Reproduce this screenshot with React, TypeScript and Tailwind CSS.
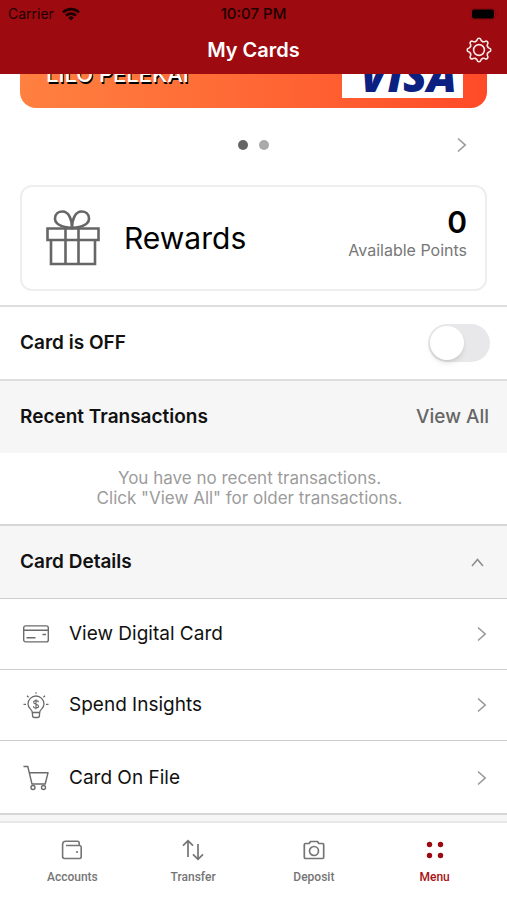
import React, { useState } from "react";

const Chevron = () => (
  <svg width="10" height="16" viewBox="0 0 10 16" fill="none" stroke="#999" strokeWidth="1.6">
    <path d="M1 1.5 8.2 8 1 14.5" />
  </svg>
);

const toothAngles = [0, 45, 90, 135, 180, 225, 270, 315];

const GearIcon = () => (
  <svg width="26" height="26" viewBox="-13 -13 26 26" fill="none" stroke="#fbeaea" strokeWidth="1.6" strokeLinecap="round">
    {toothAngles.map((angle) => (
      <path
        key={angle}
        d="M-3.52-8.5C-2.4-8.96-2-9.2-1.8-10.4Q-1.6-11.8 0-11.8Q1.6-11.8 1.8-10.4C2-9.2 2.4-8.96 3.52-8.5"
        transform={`rotate(${angle})`}
      />
    ))}
    <circle r="5.4" />
  </svg>
);

const WifiIcon = () => (
  <svg width="18" height="14" viewBox="0 0 18 14" fill="none" stroke="#1c0002" strokeWidth="2.6">
    <path d="M1 5.4a11.4 11.4 0 0 1 16 0M4 8.6a7.2 7.2 0 0 1 10 0" />
    <path d="M9 13.6 6.2 10.7a4 4 0 0 1 5.6 0z" fill="#1c0002" stroke="none" />
  </svg>
);

const BatteryIcon = () => (
  <svg width="29" height="12" viewBox="0 0 29 12">
    <rect x="0.5" y="0.5" width="25" height="11" rx="3" fill="none" stroke="#8d080d" />
    <rect x="2" y="1.5" width="22" height="9" rx="2" fill="#000" />
    <path d="M27 4v4c1.2-.4 1.2-3.6 0-4z" fill="#7d060b" />
  </svg>
);

const GiftIcon = () => (
  <svg width="54" height="56" viewBox="0 0 54 56" fill="none" stroke="#666" strokeWidth="2.6">
    <path d="M1.5 18.5h51v11.5h-51z" />
    <path d="M5 30v24h44V30M19.5 18.5V54M32.5 18.5V54" />
    <path d="M26 18C14 17 9 13.5 9 8.5 9 4 12.5 1.5 16.5 1.5 22.5 1.5 26 9 26 18zM26 18c12-1 17-4.5 17-9.5 0-4.5-3.5-7-7.5-7-6 0-9.5 7.5-9.5 16.5z" />
  </svg>
);

const CardIcon = () => (
  <svg width="26" height="18" viewBox="0 0 26 18" fill="none" stroke="#6b6b6b" strokeWidth="1.4">
    <rect x="0.7" y="0.9" width="24.6" height="16" rx="2" />
    <path d="M.7 5.2h24.6M3.5 12.7h9M19.500 9.500h3.500" />
  </svg>
);

const BulbIcon = () => (
  <svg width="26" height="27" viewBox="0 0 26 27" fill="none" stroke="#6b6b6b" strokeWidth="1.3">
    <path d="M9.3 20.5C9.3 17.5 5 16.5 5 12a8 8 0 0 1 16 0c0 4.500-4.300 5.500-4.300 8.500z" />
    <path d="M9.500 20.500v3c0 1 .7 2 2 2h3c1.300 0 2-1 2-2v-3M13 .3v1.500M.5 12.300H3M23 12.300h2.500M4 3.700l1.600 1.600M22 3.700l-1.600 1.600" />
    <path d="M15.400 10.200c0-1-1-1.600-2.400-1.600s-2.400.6-2.400 1.700c0 2.500 5 1.500 5 4 0 1.100-1.100 1.700-2.600 1.700s-2.600-.7-2.600-1.800M13 7.300v10" strokeWidth="1.1" />
  </svg>
);

const CartIcon = () => (
  <svg width="26" height="26" viewBox="0 0 26 26" fill="none" stroke="#6b6b6b" strokeWidth="1.4" strokeLinejoin="round">
    <path d="M.5 1.500h4.300L9 19h13.200L25 7.800H6.300" />
    <circle cx="10" cy="22.500" r="2" />
    <circle cx="20.500" cy="22.500" r="2" />
  </svg>
);

const WalletIcon = () => (
  <svg width="22" height="20" viewBox="0 0 22 20" fill="none" stroke="#757575" strokeWidth="1.6">
    <path d="M5 5.500h13.500a1.700 1.700 0 0 1 1.700 1.700v9.600a1.700 1.700 0 0 1-1.700 1.700h-15a1.900 1.900 0 0 1-1.900-1.900V4.500c0-2 1.200-3.200 3.200-3.200h11.700c1 0 1.700.7 1.700 1.700v2.500" />
    <circle cx="16" cy="12" r="1.1" fill="#757575" stroke="none" />
  </svg>
);

const TransferIcon = () => (
  <svg width="22" height="22" viewBox="0 0 22 22" fill="none" stroke="#757575" strokeWidth="1.7">
    <path d="M6 18V2M1 6.700l5-5 5 5M16 5v15M11 15.300l5 5 5-5" />
  </svg>
);

const CameraIcon = () => (
  <svg width="22" height="20" viewBox="0 0 22 20" fill="none" stroke="#757575" strokeWidth="1.7" strokeLinejoin="round">
    <path d="M2.500 3.500h3.700l1.300-2h7l1.300 2h3.700c.8 0 1.200.5 1.200 1.200v12.600c0 .7-.4 1.200-1.200 1.200h-17c-.8 0-1.200-.5-1.200-1.200V4.700c0-.7.400-1.200 1.200-1.200z" />
    <circle cx="11" cy="11" r="4.5" />
  </svg>
);

const MenuIcon = () => (
  <svg width="18" height="18" viewBox="0 0 18 18" fill="#9b0a10">
    <circle cx="3.5" cy="3.5" r="2.7" />
    <circle cx="14.5" cy="3.5" r="2.7" />
    <circle cx="3.5" cy="14.5" r="2.7" />
    <circle cx="14.5" cy="14.5" r="2.7" />
  </svg>
);

const links = [
  { label: "View Digital Card", icon: <CardIcon /> },
  { label: "Spend Insights", icon: <BulbIcon /> },
  { label: "Card On File", icon: <CartIcon /> },
];

const tabs = [
  { label: "Accounts", icon: <WalletIcon /> },
  { label: "Transfer", icon: <TransferIcon /> },
  { label: "Deposit", icon: <CameraIcon /> },
  { label: "Menu", icon: <MenuIcon />, active: true },
];

export default function App() {
  const [cardOn, setCardOn] = useState(false);
  const [open, setOpen] = useState(true);

  return (
    <div className="flex min-h-screen flex-col bg-white font-['Inter',sans-serif] text-[#111]">
      <header className="bg-[#9d0a0f]">
        <div className="grid h-7 grid-cols-3 items-center px-2 text-sm text-[#1c0002]">
          <div className="flex items-center gap-2">
            <span>Carrier</span>
            <WifiIcon />
          </div>
          <span className="text-center text-[15px] font-medium">10:07 PM</span>
          <div className="flex justify-end">
            <BatteryIcon />
          </div>
        </div>
        <div className="grid h-[46px] grid-cols-[1fr_auto_1fr] items-center px-[15px] pb-[2px]">
          <h1 className="col-start-2 text-xl font-semibold text-white">My Cards</h1>
          <button type="button" aria-label="Card settings" className="justify-self-end">
            <GearIcon />
          </button>
        </div>
      </header>

      <main className="flex-1 bg-[#f6f6f6]">
        <section className="bg-white">
          {/* only the bottom edge of the card shows below the header */}
          <div className="flex h-[34px] items-end overflow-hidden px-5">
            <div className="flex h-52 w-full shrink-0 items-end justify-between rounded-2xl bg-linear-to-r from-[#ff8040] to-[#ff4a28] pr-6 pl-[26px]">
              <span className="pb-5 text-[22px] leading-7 font-medium [text-shadow:1px_2px_0_#000] text-white">LILO PELEKAI</span>
              <div className="mb-[10px] flex h-14 w-[121px] items-end justify-center bg-white pl-3 font-['Open_Sans',sans-serif] text-[44px] leading-[46px] font-extrabold text-[#0b2080] italic">
                VISA
              </div>
            </div>
          </div>
          <div className="grid h-[77px] grid-cols-[1fr_auto_1fr] items-center px-10 pb-1">
            <div className="col-start-2 flex gap-[11px]">
              <span className="size-[10px] rounded-full bg-[#666]" />
              <span className="size-[10px] rounded-full bg-[#aaa]" />
            </div>
            <button type="button" aria-label="Next card" className="justify-self-end">
              <Chevron />
            </button>
          </div>
          <div className="px-5 pb-[14px]">
            <div className="flex h-[106px] items-center rounded-xl border-2 border-[#eee] pr-[18px] pl-6">
              <GiftIcon />
              <h2 className="ml-6 flex-1 text-[30px] leading-9 text-black">Rewards</h2>
              <div className="pb-3 text-right">
                <p className="text-[30px] leading-9 font-semibold text-black">0</p>
                <p className="text-base leading-5 text-[#777]">Available Points</p>
              </div>
            </div>
          </div>
        </section>

        <section className="flex h-[76px] items-center justify-between border-y-2 border-[#dedede] bg-white pr-[17px] pl-5">
          <label htmlFor="card-switch" className="text-[19px] font-semibold">
            Card is OFF
          </label>
          <input
            id="card-switch"
            type="checkbox"
            role="switch"
            checked={cardOn}
            onChange={(e) => setCardOn(e.target.checked)}
            className="flex h-[38px] w-[62px] appearance-none items-center rounded-full bg-[#e8e8ea] px-[2px] before:size-[34px] before:rounded-full before:bg-white before:shadow-md checked:justify-end checked:bg-[#9d0a0f]"
          />
        </section>

        <section>
          <div className="flex h-[72px] items-center justify-between pr-[18px] pl-5">
            <h2 className="text-[19px] font-semibold">Recent Transactions</h2>
            <a href="#transactions" className="text-[19px] font-medium text-[#666]">
              View All
            </a>
          </div>
          <p className="bg-white pt-[15px] pr-7 pb-4 pl-5 text-center text-[17px] leading-5 text-[#9c9c9c]">
            You have no recent transactions.
            <br />
            Click "View All" for older transactions.
          </p>
        </section>

        <section className="border-y-2 border-[#d6d6d6]">
          <button
            type="button"
            aria-expanded={open}
            onClick={() => setOpen(!open)}
            className="flex h-[72px] w-full items-center justify-between pr-[23px] pl-5 text-[19px] font-semibold"
          >
            Card Details
            <svg width="13" height="9" viewBox="0 0 13 9" fill="none" stroke="#8c8c8c" strokeWidth="1.5">
              <path d="M1 8 6.500 1.500 12 8" />
            </svg>
          </button>
          {open && (
            <ul>
              {links.map((link) => (
                <li key={link.label} className="border-t border-[#cdcdcd] bg-white last:pt-[2px]">
                  <a href="#details" className="flex h-[70px] items-center pr-5 pl-[23px] text-[19px]">
                    {link.icon}
                    <span className="ml-5 flex-1">{link.label}</span>
                    <Chevron />
                  </a>
                </li>
              ))}
            </ul>
          )}
        </section>
      </main>

      <nav className="grid h-[79px] grid-cols-4 border-t-2 border-[#e8e8e8] bg-white px-3 font-['Roboto',sans-serif] text-xs font-medium text-[#757575]">
        {tabs.map((tab) => (
          <a key={tab.label} href="#tab" className={tab.active ? "flex flex-col items-center pt-[15px] text-[#a80f14]" : "flex flex-col items-center pt-[15px]"}>
            <span className="flex h-6 items-center">{tab.icon}</span>
            <span className="mt-[7px]">{tab.label}</span>
          </a>
        ))}
      </nav>
    </div>
  );
}
